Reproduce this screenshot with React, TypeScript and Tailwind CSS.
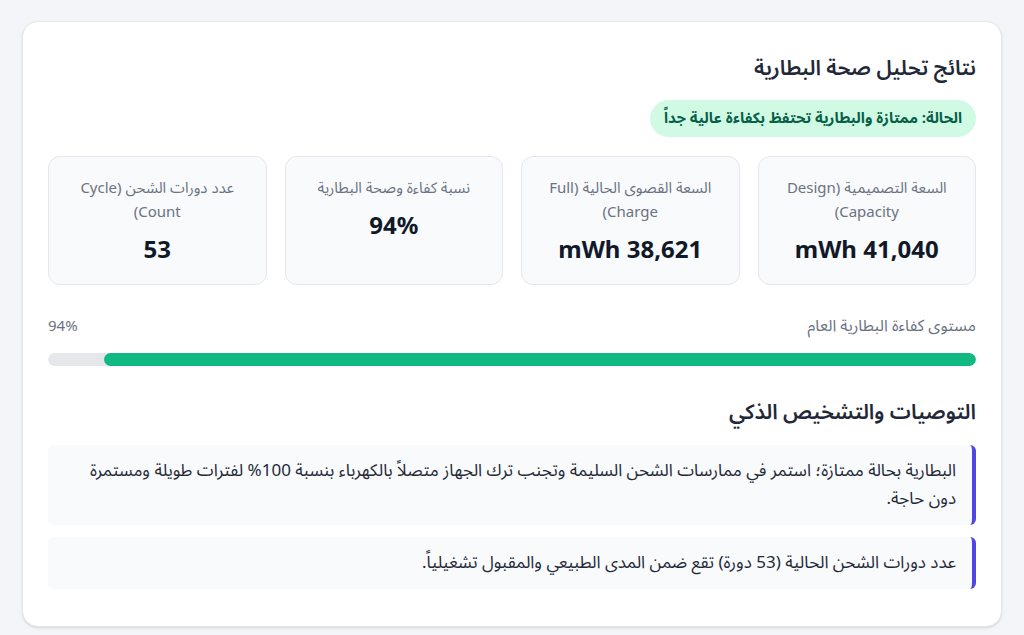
import React from 'react';

const stats = [
  { label: 'السعة التصميمية (Design Capacity)', value: '41,040 mWh' },
  { label: 'السعة القصوى الحالية (Full Charge)', value: '38,621 mWh' },
  { label: 'نسبة كفاءة وصحة البطارية', value: '94%' },
  { label: 'عدد دورات الشحن (Cycle Count)', value: '53' },
];

const tips = [
  'البطارية بحالة ممتازة؛ استمر في ممارسات الشحن السليمة وتجنب ترك الجهاز متصلاً بالكهرباء بنسبة 100% لفترات طويلة ومستمرة دون حاجة.',
  'عدد دورات الشحن الحالية (53 دورة) تقع ضمن المدى الطبيعي والمقبول تشغيلياً.',
];

export default function App() {
  const health = 94;
  return (
    <div dir="rtl" className="min-h-screen bg-[#f3f5f8] px-[22px] pt-[21px] pb-2 font-['Noto_Sans','Noto_Sans_Arabic',sans-serif]">
      <div className="bg-white rounded-2xl border border-[#e5e7eb] shadow-sm px-[25px] pt-[28px] pb-[37px]">
        <h2 className="text-[21px] font-semibold text-[#1f2937] leading-[36px] font-['Noto_Sans_Arabic',sans-serif]">نتائج تحليل صحة البطارية</h2>

        <div className="mt-[14px] flex">
          <span className="flex items-center h-[37px] bg-[#d1fae5] text-[#065f46] font-bold text-[15px] rounded-full px-[14px] font-['Noto_Sans_Arabic',sans-serif]">
            الحالة: ممتازة والبطارية تحتفظ بكفاءة عالية جداً
          </span>
        </div>

        <div className="mt-[19px] grid grid-cols-4 gap-[18px]">
          {stats.map(s => (
            <div key={s.label} className="h-[129px] bg-[#f8fafc] border border-[#e5e7eb] rounded-xl px-5 pt-[18px] text-center">
              <div className="text-[15px] text-[#6b7280] leading-[24px]">{s.label}</div>
              <div className="mt-[8px] text-[24px] font-bold text-[#111827] leading-[36px]">{s.value}</div>
            </div>
          ))}
        </div>

        <div className="mt-[29px] flex justify-between items-center text-[16px] text-[#6b7280] leading-[24px] font-['Noto_Sans_Arabic',sans-serif]">
          <span>مستوى كفاءة البطارية العام</span>
          <span className="text-[15px]">{health}%</span>
        </div>
        <div className="mt-[15px] h-[13px] bg-[#e5e7eb] rounded-full overflow-hidden">
          <div className="h-full bg-[#10b981] rounded-full" style={{ width: `${health}%` }} />
        </div>

        <h3 className="mt-[28px] text-[21px] font-semibold text-[#1f2937] leading-[36px] font-['Noto_Sans_Arabic',sans-serif]">التوصيات والتشخيص الذكي</h3>

        <div className="mt-[15px] flex flex-col gap-[12px]">
          {tips.map(t => (
            <div key={t} className="bg-[#f8fafc] border-r-4 border-[#4f46e5] rounded-md px-4 py-3 text-[17px] text-[#1f2937] leading-[28px] font-['Noto_Sans_Arabic',sans-serif]">
              {t}
            </div>
          ))}
        </div>
      </div>
    </div>
  );
}
